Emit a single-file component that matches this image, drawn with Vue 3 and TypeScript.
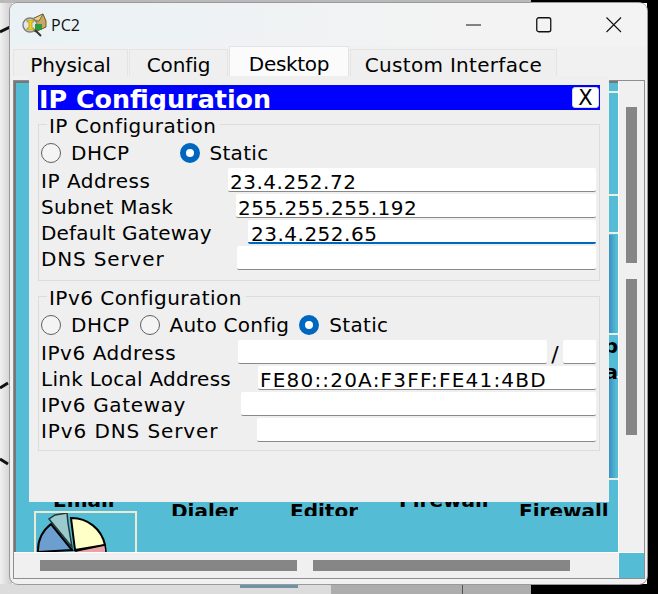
<script setup lang="ts">
interface Field {
  label: string
  value: string
  labelWidth: number
  spacing: number
  active?: boolean
  prefix?: boolean
  wide?: boolean
}

const tabs = ['Physical', 'Config', 'Desktop', 'Custom Interface']

const ipv4Fields: Field[] = [
  { label: 'IP Address', value: '23.4.252.72', labelWidth: 187, spacing: 0.55 },
  { label: 'Subnet Mask', value: '255.255.255.192', labelWidth: 195, spacing: 0.3 },
  { label: 'Default Gateway', value: '23.4.252.65', labelWidth: 207, spacing: 0.2, active: true },
  { label: 'DNS Server', value: '', labelWidth: 196, spacing: 0.85 },
]

const ipv6Fields: Field[] = [
  { label: 'IPv6 Address', value: '', labelWidth: 197, spacing: 0.55, prefix: true },
  { label: 'Link Local Address', value: 'FE80::20A:F3FF:FE41:4BD', labelWidth: 217, spacing: 0.27, wide: true },
  { label: 'IPv6 Gateway', value: '', labelWidth: 200, spacing: 0.65 },
  { label: 'IPv6 DNS Server', value: '', labelWidth: 216, spacing: 0.9 },
]

// desktop icons behind the dialog, only slices of their captions show
const captions = [
  { text: 'Email', x: 37, y: 487, h: 26 },
  { text: 'Dialer', x: 155, y: 498, h: 18 },
  { text: 'Editor', x: 274, y: 498, h: 18 },
  { text: 'Firewall', x: 383, y: 487, h: 26 },
  { text: 'Firewall', x: 503, y: 498, h: 18 },
]

const stripLines = [91, 194, 232, 333, 376, 478]
</script>

<template>
  <div class="desk">
    <svg class="backdrop" width="658" height="594" viewBox="0 0 658 594">
      <defs>
        <linearGradient id="shade" x1="0" x2="1" y1="0" y2="0">
          <stop offset="0" stop-color="#f0f0f0" />
          <stop offset="1" stop-color="#cdcdcd" />
        </linearGradient>
      </defs>
      <rect x="0" y="0" width="12" height="594" fill="url(#shade)" />
      <rect x="0" y="0" width="658" height="3" fill="#b9b9b9" />
      <rect x="0" y="584" width="331" height="10" fill="#dcdcdc" />
      <rect x="240" y="583" width="58" height="5" fill="#6f93a6" />
      <rect x="331" y="584" width="200" height="10" fill="#adadad" />
      <rect x="462" y="584" width="1" height="10" fill="#555" />
      <rect x="531" y="0" width="127" height="3" fill="#000" />
      <rect x="531" y="584" width="127" height="10" fill="#000" />
      <rect x="647" y="0" width="11" height="594" fill="#000" />
      <path d="M0 32L10 27M0 388L8 383M0 459L8 464" stroke="#111" stroke-width="3" fill="none" />
    </svg>

    <div class="window">
      <header class="titlebar">
        <svg class="app-icon" width="25" height="24" viewBox="0 0 25 24">
          <path d="M8 7L21 1L24 8L24 14L13 19L9 13Z" fill="#c9a860" stroke="#6b5a2a" stroke-width="1" />
          <path d="M8 7L17 8L21 1Z" fill="#e6cf95" stroke="#6b5a2a" stroke-width=".8" />
          <circle cx="8" cy="12" r="7" fill="#e3e6e6" stroke="#7d7d7d" stroke-width="1.4" />
          <path d="M13 11H20V17H13Z" fill="#2f9a3c" />
          <path d="M5 7H12V9H10V15H12V17H5V15H7V9H5Z" fill="#f4d21e" stroke="#7a6a10" stroke-width=".5" />
          <path d="M13 17L19 23" stroke="#333" stroke-width="2" />
        </svg>
        <span class="window-title">PC2</span>
        <div class="controls">
          <span class="control">
            <svg width="16" height="16" viewBox="0 0 16 16"><path d="M0 8H15" stroke="#111" stroke-width="1" /></svg>
          </span>
          <span class="control">
            <svg width="16" height="16" viewBox="0 0 16 16"><rect x=".75" y=".75" width="14" height="14" rx="2" fill="none" stroke="#111" stroke-width="1.3" /></svg>
          </span>
          <span class="control">
            <svg width="16" height="16" viewBox="0 0 16 16"><path d="M.5 .5L15 15M15 .5L.5 15" stroke="#111" stroke-width="1.1" /></svg>
          </span>
        </div>
      </header>

      <nav class="tabs">
        <span
          v-for="tab in tabs"
          :key="tab"
          class="tab"
          :class="{ current: tab === 'Desktop', custom: tab === 'Custom Interface' }"
        >{{ tab }}</span>
      </nav>

      <div class="body">
        <div class="frame">
          <div class="view">
            <span
              v-for="c in captions"
              :key="c.x"
              class="caption"
              :style="{ left: c.x + 'px', top: c.y - 83 + 'px', height: c.h + 'px' }"
            >{{ c.text }}</span>

            <div class="selected-app">
              <svg width="99" height="39" viewBox="0 0 99 39">
                <path d="M36 37L15 11A34 34 0 0 0 2 39Z" fill="#6c9fd0" stroke="#000" stroke-width="2" />
                <path d="M39 37L35 5A34 34 0 0 1 69 32Z" fill="#ffffc8" stroke="#000" stroke-width="2" />
                <path d="M40 38L69 32A34 34 0 0 1 70 40L40 40Z" fill="#e9a2a6" stroke="#000" stroke-width="1.5" />
                <path d="M36 34L13 6L19 2L31 0L32 10Z" fill="#9cc9cc" stroke="#1d3a3d" stroke-width="1.5" />
              </svg>
            </div>

            <i v-for="y in stripLines" :key="y" class="strip-line" :style="{ top: y - 83 + 'px' }"></i>
            <i class="strip-glow one"></i>
            <i class="strip-glow two"></i>
            <b class="strip-glyph one">p</b>
            <b class="strip-glyph two">a</b>
          </div>

          <div class="vscroll">
            <i class="vthumb"></i>
            <i class="vthumb"></i>
          </div>
          <div class="hscroll">
            <i class="hthumb"></i>
            <i class="hthumb"></i>
          </div>
          <div class="corner"></div>
        </div>

        <section class="dialog">
          <div class="dialog-head">
            <h1>IP Configuration</h1>
            <button class="close" type="button">X</button>
          </div>

          <fieldset class="group first">
            <legend>IP Configuration</legend>
            <div class="radios">
              <label class="radio"><input type="radio" name="v4" />DHCP</label>
              <label class="radio static-v4"><input type="radio" name="v4" checked />Static</label>
            </div>
            <div v-for="f in ipv4Fields" :key="f.label" class="row">
              <span class="row-label" :style="{ width: f.labelWidth + 'px', letterSpacing: f.spacing + 'px' }">{{ f.label }}</span>
              <input class="entry" :class="{ active: f.active }" :value="f.value" readonly />
            </div>
          </fieldset>

          <fieldset class="group second">
            <legend>IPv6 Configuration</legend>
            <div class="radios">
              <label class="radio"><input type="radio" name="v6" />DHCP</label>
              <label class="radio auto"><input type="radio" name="v6" />Auto Config</label>
              <label class="radio static-v6"><input type="radio" name="v6" checked />Static</label>
            </div>
            <div v-for="f in ipv6Fields" :key="f.label" class="row">
              <span class="row-label" :style="{ width: f.labelWidth + 'px', letterSpacing: f.spacing + 'px' }">{{ f.label }}</span>
              <input class="entry" :class="{ wide: f.wide }" :value="f.value" readonly />
              <template v-if="f.prefix">
                <span class="slash">/</span>
                <input class="entry prefix" value="" readonly />
              </template>
            </div>
          </fieldset>
        </section>
      </div>
    </div>
  </div>
</template>

<style>
html,
body {
  margin: 0;
  background: #fff;
}
</style>

<style scoped>
.desk {
  position: relative;
  width: 658px;
  height: 594px;
  box-sizing: border-box;
  padding: 3px 11px 10px 10px;
  overflow: hidden;
  font-family: "DejaVu Sans", sans-serif;
  font-size: 20px;
  color: #000;
}

.backdrop {
  position: absolute;
  left: 0;
  top: 0;
}

.window {
  position: relative;
  box-sizing: border-box;
  height: 581px;
  display: flex;
  flex-direction: column;
  background: #f1f1f1;
  border-radius: 8px;
  box-shadow: 0 0 0 1px #9a9a9a;
  overflow: hidden;
}

.titlebar {
  height: 43px;
  flex: none;
  display: flex;
  align-items: center;
  padding-left: 12px;
  background: linear-gradient(90deg, #eaf2f5, #f3f3f3 70%);
}

.app-icon {
  flex: none;
}

.window-title {
  margin-left: 4px;
  font-family: "Open Sans", sans-serif;
  font-size: 16px;
  color: #111;
}

.controls {
  margin-left: auto;
  display: flex;
  gap: 4px;
}

.control {
  width: 66px;
  height: 16px;
  display: flex;
  justify-content: center;
}

.tabs {
  height: 30px;
  flex: none;
  display: flex;
  align-items: flex-end;
  gap: 1px;
  padding-left: 3px;
}

.tab {
  box-sizing: border-box;
  width: 115px;
  height: 27px;
  line-height: 30px;
  text-align: center;
  background: #efefef;
  border: 1px solid #e4e4e4;
  border-bottom: 0;
  white-space: nowrap;
  letter-spacing: -0.1px;
}

.tab:nth-child(2) {
  width: 99px;
}

.tab.current {
  width: 120px;
  height: 30px;
  line-height: 35px;
  background: #fbfbfb;
  letter-spacing: -0.3px;
}

.tab.custom {
  width: 207px;
  letter-spacing: 0.3px;
}

.body {
  position: relative;
  flex: 1;
  min-height: 0;
  padding: 4px 2px 5px 3px;
  display: flex;
}

.frame {
  flex: 1;
  display: grid;
  grid-template-columns: 1fr 26px;
  grid-template-rows: 1fr 26px;
  border: 1px solid #8d8d96;
  background: #f0f0f0;
}

.view {
  position: relative;
  overflow: hidden;
  background: #54bcd4;
  border-top: 2px solid #777;
  border-left: 2px solid #777;
}

.caption {
  position: absolute;
  overflow: hidden;
  font-weight: 700;
  font-size: 20px;
  line-height: 26px;
  white-space: nowrap;
}

.selected-app {
  position: absolute;
  left: 18px;
  bottom: 0;
  width: 99px;
  height: 39px;
  border: 2px solid #ece8d2;
  border-bottom: 0;
  overflow: hidden;
}

.selected-app svg {
  display: block;
}

.strip-line {
  position: absolute;
  left: 593px;
  width: 9px;
  height: 2px;
  background: #e7f1e8;
}

.strip-glow {
  position: absolute;
  left: 593px;
  width: 9px;
  background: linear-gradient(90deg, #3b8ec2, #54bcd4 80%);
}

.strip-glow.one {
  top: 152px;
  height: 98px;
}

.strip-glow.two {
  top: 296px;
  height: 99px;
}

.strip-glyph {
  position: absolute;
  left: 588px;
  font-size: 20px;
  line-height: 20px;
  width: 14px;
  overflow: hidden;
  direction: rtl;
}

.strip-glyph.one {
  top: 253px;
}

.strip-glyph.two {
  top: 279px;
}

.vscroll {
  display: flex;
  flex-direction: column;
  align-items: center;
  gap: 16px;
  padding-top: 26px;
  border-left: 1px solid #fff;
}

.vthumb {
  width: 11px;
  height: 156px;
  background: #868686;
}

.hscroll {
  display: flex;
  gap: 16px;
  padding: 7px 0 0 26px;
  border-top: 1px solid #fff;
}

.hthumb {
  width: 257px;
  height: 11px;
  background: #868686;
}

.corner {
  background: #54bcd4;
  border-top: 1px solid #fff;
  border-left: 1px solid #fff;
}

.dialog {
  position: absolute;
  left: 19px;
  top: 0;
  width: 580px;
  height: 426px;
  box-sizing: border-box;
  padding: 9px 9px 0;
  background: #efefef;
}

.dialog-head {
  height: 25px;
  display: flex;
  align-items: center;
  justify-content: space-between;
  padding-right: 1px;
  background: #0000ff;
  overflow: hidden;
}

.dialog-head h1 {
  margin: 0;
  font-size: 25.4px;
  font-weight: 700;
  line-height: 29px;
  color: #fff;
  padding: 4px 0 0 1px;
}

.close {
  box-sizing: border-box;
  width: 27px;
  height: 21px;
  padding: 0;
  border: 1px solid #d6d6d6;
  border-radius: 3px;
  background: #fff;
  font-family: inherit;
  font-size: 21px;
  line-height: 20px;
  color: #000;
}

.group {
  margin: 2px 0 0;
  padding: 0 3px 11px 2px;
  border: 1px solid #dcdcdc;
  min-width: 0;
}

.group.second {
  margin-top: 3px;
  padding-bottom: 9px;
}

.group legend {
  position: relative;
  top: 2px;
  margin-left: 6px;
  padding: 0 4px 0 2px;
  line-height: 24px;
  letter-spacing: 0.47px;
}

.radios {
  height: 20px;
  margin: 7px 0 5px;
  display: flex;
  align-items: center;
}

.radio {
  display: flex;
  align-items: center;
  gap: 10px;
  letter-spacing: 0.5px;
  line-height: 20px;
}

.radio.static-v4 {
  margin-left: 51px;
  letter-spacing: 0.3px;
  gap: 9px;
}

.radio.auto {
  margin-left: 11px;
  gap: 9px;
  letter-spacing: 0.26px;
}

.radio.static-v6 {
  margin-left: 10px;
  letter-spacing: 0.3px;
}

.radio input {
  appearance: none;
  box-sizing: border-box;
  width: 20px;
  height: 20px;
  margin: 0;
  border: 1px solid #5f5f5f;
  border-radius: 50%;
  background: #f4f4f4;
}

.radio input:checked {
  border: 6px solid #0067c0;
  background: #fff;
}

.row {
  height: 23px;
  margin-bottom: 3px;
  display: flex;
  align-items: flex-start;
}

.row:last-child {
  margin-bottom: 0;
}

.row-label {
  flex: none;
  line-height: 27px;
  white-space: nowrap;
}

.entry {
  flex: 1;
  min-width: 0;
  box-sizing: border-box;
  height: 24px;
  padding: 5px 0 0 2px;
  border: 0;
  border-bottom: 1px solid #8a8a8a;
  border-radius: 2px;
  outline: none;
  background: #fff;
  font-family: inherit;
  font-size: 20px;
  letter-spacing: 0.5px;
  color: #000;
}

.entry.active {
  border-bottom: 2px solid #0067c0;
  padding-left: 3px;
}

.entry.wide {
  letter-spacing: 1.2px;
}

.entry.prefix {
  flex: none;
  width: 33px;
}

.slash {
  flex: none;
  width: 16px;
  text-align: center;
  font-size: 22px;
  line-height: 30px;
}
</style>
